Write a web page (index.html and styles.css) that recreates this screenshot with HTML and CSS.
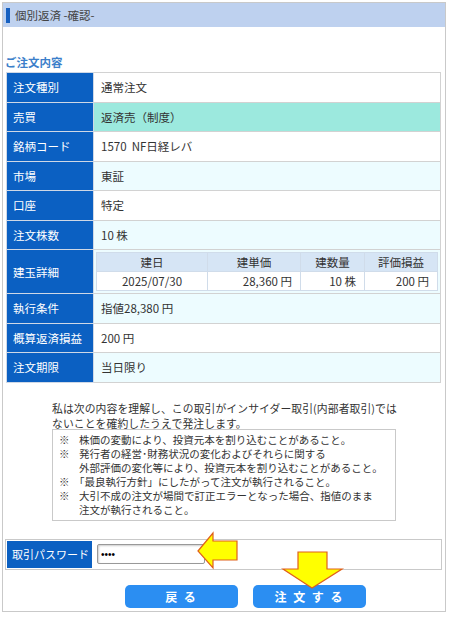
FILE: index.html
```html
<!DOCTYPE html>
<html lang="ja">
<head>
  <meta charset="UTF-8">
  <title>個別返済 -確認-</title>
  <link rel="stylesheet" href="styles.css">
</head>
<body>
  <div class="frame">
    <div class="head"><span class="mark"></span>個別返済 -確認-</div>

    <div class="sec-title">ご注文内容</div>

    <table class="order">
      <tr><th>注文種別</th><td>通常注文</td></tr>
      <tr class="sell"><th>売買</th><td>返済売（制度）</td></tr>
      <tr><th>銘柄コード</th><td>1570&nbsp;&nbsp;NF日経レバ</td></tr>
      <tr class="alt"><th>市場</th><td>東証</td></tr>
      <tr><th>口座</th><td>特定</td></tr>
      <tr class="alt"><th>注文株数</th><td>10 株</td></tr>
      <tr class="alt">
        <th>建玉詳細</th>
        <td class="nest-cell">
          <table class="nest">
            <tr><th>建日</th><th>建単価</th><th>建数量</th><th>評価損益</th></tr>
            <tr><td class="c">2025/07/30</td><td>28,360 円</td><td>10 株</td><td>200 円</td></tr>
          </table>
        </td>
      </tr>
      <tr class="alt"><th>執行条件</th><td>指値28,380 円</td></tr>
      <tr><th>概算返済損益</th><td>200 円</td></tr>
      <tr class="alt"><th>注文期限</th><td>当日限り</td></tr>
    </table>

    <p class="intro">私は次の内容を理解し、この取引がインサイダー取引(内部者取引)では<br>ないことを確約したうえで発注します。</p>

    <ul class="notes">
      <li><span>※</span><span>株価の変動により、投資元本を割り込むことがあること。</span></li>
      <li><span>※</span><span>発行者の経営･財務状況の変化およびそれらに関する<br>外部評価の変化等により、投資元本を割り込むことがあること。</span></li>
      <li><span>※</span><span class="q">「最良執行方針」にしたがって注文が執行されること。</span></li>
      <li><span>※</span><span>大引不成の注文が場間で訂正エラーとなった場合、指値のまま<br>注文が執行されること。</span></li>
    </ul>

    <div class="pass-row">
      <div class="pass-label">取引パスワード</div>
      <div class="pass-field"><input type="password" value="1234"></div>
    </div>

    <div class="btn-row">
      <button class="btn">戻 る</button>
      <button class="btn">注 文 す る</button>
    </div>

    <svg class="arrow-left" width="44" height="40" viewBox="0 0 44 40">
      <polygon points="2,20 17,2 17,10 41,10 41,29 17,29 17,37" fill="#ffff00" stroke="#e0601a" stroke-width="1.2"/>
    </svg>
    <svg class="arrow-down" width="64" height="40" viewBox="0 0 64 40">
      <polygon points="17,2 46,2 46,19 61,19 31,38 2,19 17,19" fill="#ffff00" stroke="#e0601a" stroke-width="1.2"/>
    </svg>
  </div>
</body>
</html>
```
FILE: styles.css
```css
body {
  margin: 0;
  background: #fff;
  font-family: "Noto Sans CJK JP", "Noto Sans", sans-serif;
  color: #333;
}
.frame {
  position: relative;
  margin: 2px;
  width: 442px;
  border: 1px solid #c9c9c9;
  padding-bottom: 3px;
}
.head {
  height: 24px;
  background: #bed1ef;
  display: flex;
  align-items: center;
  font-size: 11.5px;
  color: #444;
  padding-left: 3px;
}
.mark {
  width: 4px;
  height: 15px;
  background: #1660c0;
  margin-right: 5px;
}
.sec-title {
  margin: 27px 0 1px 2px;
  height: 17px;
  line-height: 17px;
  font-size: 11.5px;
  font-weight: bold;
  color: #3c7fca;
}
.order {
  margin-left: 3px;
  width: 435px;
  border-collapse: collapse;
  font-size: 11.5px;
}
.order > tbody > tr > th,
.order > tbody > tr > td {
  border: 1px solid #d2d2d2;
  height: 28.5px;
  padding: 0;
  text-align: left;
  font-weight: normal;
}
.order > tbody > tr > th {
  width: 80px;
  background: #0b60c2;
  color: #fff;
  padding-left: 6px;
  border-color: #cfd8e6;
}
.order > tbody > tr > td {
  padding-left: 7px;
  background: #fff;
}
.order > tbody > tr.alt > td { background: #edfcff; }
.order > tbody > tr.sell > td { background: #9ce9de; }
.order > tbody > tr > td.nest-cell {
  padding: 2px;
  height: auto;
}
.nest {
  width: 100%;
  border-collapse: collapse;
  font-size: 11.5px;
}
.nest th, .nest td {
  border: 1px solid #d0dcea;
  height: 18px;
  padding: 0 8px 0 0;
}
.nest th {
  background: #d6e5f5;
  font-weight: normal;
  text-align: center;
  padding: 0;
}
.nest td {
  background: #fff;
  text-align: right;
}
.nest td.c { text-align: center; padding: 0; }
.nest th:nth-child(1) { width: 110px; }
.nest th:nth-child(2) { width: 92px; }
.nest th:nth-child(3) { width: 63px; }
.intro {
  margin: 18px 0 0 49px;
  font-size: 10.8px;
  line-height: 15px;
  color: #333;
  letter-spacing: 0.1px;
}
.notes {
  list-style: none;
  margin: -2px 0 0 49px;
  width: 331px;
  padding: 3px 5px 3px 6px;
  border: 1px solid #c9c9c9;
  font-size: 10.5px;
  line-height: 14px;
}
.notes li {
  display: grid;
  grid-template-columns: 20px 1fr;
}
.notes .q { margin-left: -5px; }
.pass-row {
  display: flex;
  margin: 18px 0 0 2px;
  width: 434px;
  height: 29px;
  border: 1px solid #c9c9c9;
  padding: 0 0 0 1px;
}
.pass-label {
  width: 80px;
  background: #0b60c2;
  color: #fff;
  font-size: 11px;
  display: flex;
  align-items: center;
  padding-left: 5px;
  margin: 1px 0;
}
.pass-field {
  display: flex;
  align-items: center;
  padding-left: 5px;
}
.pass-field input {
  width: 100px;
  height: 16px;
  border: 1px solid #999;
  border-radius: 2px;
  padding: 1px 3px;
  font-size: 10px;
  box-shadow: inset 1px 1px 2px rgba(0, 0, 0, 0.2);
}
.btn-row {
  display: flex;
  gap: 15px;
  margin: 15px 0 0 122px;
}
.btn {
  width: 113px;
  height: 23px;
  border: none;
  border-radius: 5px;
  background: #2b8ef2;
  color: #fff;
  font-family: inherit;
  font-size: 12px;
  font-weight: bold;
  letter-spacing: 2px;
  padding: 0;
}
.arrow-left {
  position: absolute;
  left: 193px;
  top: 528px;
}
.arrow-down {
  position: absolute;
  left: 278px;
  top: 547px;
}
```
